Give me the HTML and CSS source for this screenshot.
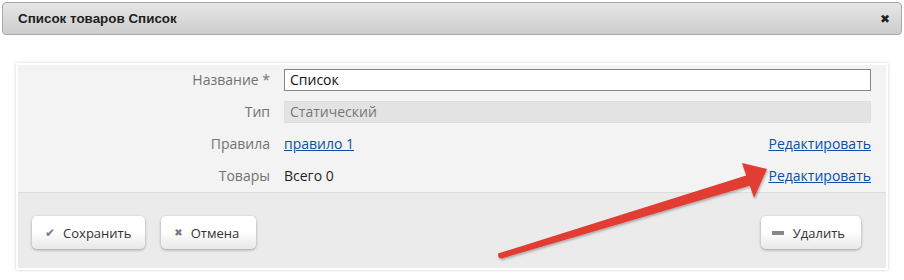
FILE: index.html
```html
<!DOCTYPE html>
<html lang="ru">
<head>
<meta charset="utf-8">
<title>Список товаров</title>
<link rel="stylesheet" href="styles.css">
</head>
<body>
<div class="dialog-header">
  <span class="dialog-title">Список товаров Список</span>
  <span class="dialog-close">✖</span>
</div>
<div class="panel">
  <div class="form">
    <div class="label">Название *</div>
    <div class="field"><div class="input">Список</div></div>
    <div class="label">Тип</div>
    <div class="field"><div class="input disabled">Статический</div></div>
    <div class="label">Правила</div>
    <div class="field split"><a class="link" href="#">правило 1</a><a class="link" href="#">Редактировать</a></div>
    <div class="label">Товары</div>
    <div class="field split"><span class="value">Всего 0</span><a class="link" href="#">Редактировать</a></div>
  </div>
  <div class="footer">
    <div class="btn-group">
      <button class="btn"><span class="ico ico-check">✔</span>Сохранить</button>
      <button class="btn btn-cancel"><span class="ico ico-x">✖</span>Отмена</button>
    </div>
    <button class="btn btn-delete"><span class="ico-minus"></span>Удалить</button>
  </div>
</div>
<svg class="arrow" width="904" height="280" viewBox="0 0 904 280">
  <defs>
    <filter id="sh" x="-10%" y="-10%" width="120%" height="130%">
      <feDropShadow dx="1" dy="1.5" stdDeviation="1" flood-color="#000" flood-opacity="0.3"/>
    </filter>
  </defs>
  <polygon filter="url(#sh)" fill="#e23c30" points="498,253.5 746.2,175.5 742,163 767,169 754,198 749.8,185.8 501.5,258.5 498.5,257.5"/>
</svg>
</body>
</html>
```
FILE: styles.css
```css
html, body {
  margin: 0;
  padding: 0;
  background: #fff;
}
body {
  position: relative;
  width: 904px;
  height: 280px;
  overflow: hidden;
  font-family: "Open Sans", "DejaVu Sans", sans-serif;
}
.dialog-header {
  margin: 2px 2px 0 2px;
  height: 31px;
  border: 1px solid #a9a9a9;
  border-radius: 4px;
  background: linear-gradient(#e6e6e6, #cdcdcd);
  display: flex;
  align-items: center;
  justify-content: space-between;
  padding: 0 11px 0 15px;
}
.dialog-title {
  font-family: "Liberation Sans", Arial, sans-serif;
  font-weight: bold;
  font-size: 13.4px;
  color: #1e1e1e;
}
.dialog-close {
  font-size: 12px;
  color: #222;
  font-family: "DejaVu Sans", sans-serif;
  font-weight: bold;
}
.panel {
  margin: 28px 16px 0 16px;
  border: 2px solid #fff;
  box-shadow: 0 0 3px rgba(0,0,0,0.18);
  background: #f3f3f3;
}
.form {
  display: grid;
  grid-template-columns: 252px 1fr;
  column-gap: 14px;
  grid-auto-rows: 22px;
  row-gap: 10px;
  padding: 4px 15px 5px 0;
  font-size: 14px;
}
.label {
  text-align: right;
  color: #727272;
  line-height: 22px;
}
.field {
  line-height: 22px;
}
.field.split {
  display: flex;
  justify-content: space-between;
}
.input {
  box-sizing: border-box;
  height: 22px;
  border: 1px solid #858585;
  background: #fff;
  padding: 0 5px;
  line-height: 20px;
  color: #111;
}
.input.disabled {
  border-color: #dedede;
  background: #e3e3e3;
  color: #777;
}
.link {
  color: #0d4ea3;
  text-decoration: underline;
}
.value {
  color: #1e1e1e;
}
.footer {
  border-top: 1px solid #dcdcdc;
  background: #ebebeb;
  display: flex;
  justify-content: space-between;
  align-items: flex-start;
  padding: 23px 25px 19px 14px;
}
.btn-group {
  display: flex;
  gap: 16px;
}
.btn {
  height: 33px;
  box-sizing: border-box;
  border: none;
  border-radius: 5px;
  background: linear-gradient(#ffffff 45%, #e8e8e8);
  box-shadow: 0 1px 3px rgba(0,0,0,0.35);
  font-family: "Open Sans", "DejaVu Sans", sans-serif;
  font-size: 13px;
  color: #333;
  padding: 0 14px 0 13px;
  display: flex;
  align-items: center;
  gap: 8px;
}
.btn-cancel {
  padding-right: 17px;
}
.ico {
  color: #7a7a7a;
  font-family: "DejaVu Sans", sans-serif;
}
.ico-check { font-size: 12px; }
.ico-x { font-size: 10px; }
.btn-delete {
  padding: 0 16px 0 11px;
  gap: 9px;
}
.ico-minus {
  display: inline-block;
  width: 12px;
  height: 4px;
  background: #888;
}
.arrow {
  position: absolute;
  left: 0;
  top: 0;
  pointer-events: none;
}
```
